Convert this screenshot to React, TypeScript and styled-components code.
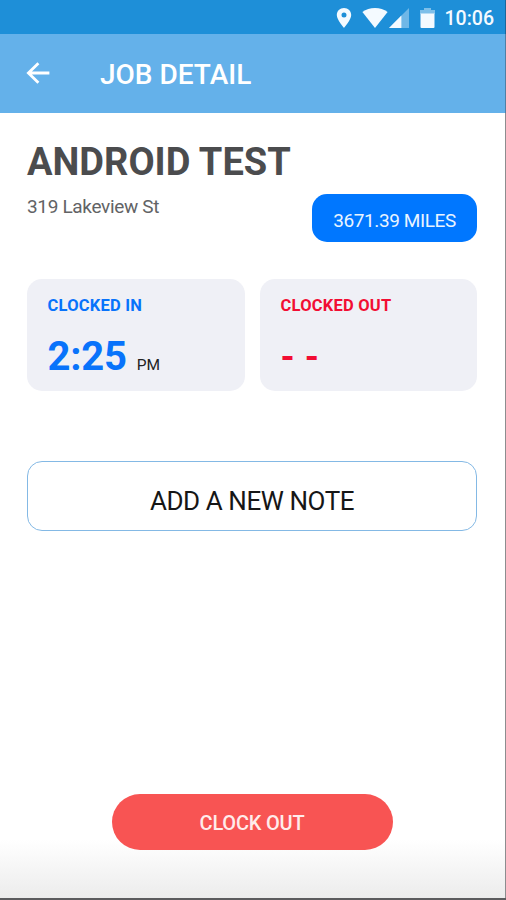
import React from "react";
import styled, { createGlobalStyle } from "styled-components";

const GlobalStyle = createGlobalStyle`
  *, *::before, *::after { box-sizing: border-box; }
  html, body { margin: 0; padding: 0; }
  body { font-family: Roboto, "Liberation Sans", sans-serif; background: #fff; }
  button { font-family: inherit; cursor: pointer; }
`;

const Screen = styled.div`
  display: flex;
  flex-direction: column;
  width: 506px;
  height: 900px;
  overflow: hidden;
  background: linear-gradient(to bottom, #fff 840px, #ececec 898px);
  border-bottom: 2px solid #5c5c5e;
`;

const StatusBar = styled.div`
  display: flex;
  align-items: center;
  justify-content: flex-end;
  flex: none;
  height: 34px;
  padding: 2px 11px 0 0;
  border-right: 1px solid #1c6699;
  background: #1e8fd8;
  color: #f4faff;
`;

const StatusIcon = styled.svg<{ $gap: number }>`
  display: block;
  flex: none;
  margin-right: ${(p) => p.$gap}px;
`;

const StatusTime = styled.span`
  margin-top: 1px;
  font-size: 19.5px;
  font-weight: 500;
  line-height: 32px;
  white-space: nowrap;
`;

const AppBar = styled.header`
  display: flex;
  align-items: center;
  flex: none;
  height: 79px;
  padding-left: 26px;
  border-right: 1px solid #4f7fa5;
  background: #64b1ea;
  color: #fff;
`;

const BackButton = styled.button`
  display: flex;
  width: 24px;
  height: 24px;
  padding: 0;
  margin: 0 50px 2px 0;
  border: 0;
  background: none;
  color: inherit;
`;

const AppTitle = styled.h1`
  margin: 2px 0 0;
  font-size: 28px;
  font-weight: 500;
  line-height: 32px;
  white-space: nowrap;
`;

const Content = styled.main`
  display: flex;
  flex-direction: column;
  flex: 1;
  padding: 26px 28px 48px 27px;
  border-right: 1px solid #8d8d8f;
`;

const JobName = styled.h2`
  margin: 0;
  font-size: 38px;
  font-weight: 700;
  line-height: 46px;
  color: #4b4c4e;
  white-space: nowrap;
`;

const JobMeta = styled.div`
  display: flex;
  justify-content: space-between;
  align-items: flex-start;
  height: 58px;
  margin-top: 9px;
`;

const Address = styled.span`
  margin-top: 1px;
  font-size: 19px;
  line-height: 24px;
  letter-spacing: -0.33px;
  color: #626365;
  white-space: nowrap;
`;

const Distance = styled.span`
  display: flex;
  align-items: center;
  justify-content: center;
  width: 165px;
  height: 48px;
  padding-top: 5px;
  border-radius: 15px;
  background: #0077ff;
  color: #e9f4ff;
  font-size: 19px;
  letter-spacing: -0.4px;
  white-space: nowrap;
`;

const ClockCards = styled.section`
  display: grid;
  grid-template-columns: 218px 217px;
  justify-content: space-between;
  margin-top: 27px;
`;

const ClockCard = styled.article<{ $color: string }>`
  height: 112px;
  padding: 17px 20.5px 0;
  border-radius: 15px;
  background: #eff0f6;
  color: ${(p) => p.$color};
`;

const ClockLabel = styled.div`
  font-size: 16.5px;
  font-weight: 700;
  line-height: 20px;
  letter-spacing: 0.22px;
  white-space: nowrap;
`;

const ClockValue = styled.div<{ $empty?: boolean }>`
  display: flex;
  align-items: baseline;
  gap: 10px;
  margin-top: 17px;
  font-size: ${(p) => (p.$empty ? 36 : 40)}px;
  font-weight: 700;
  line-height: 48px;
  letter-spacing: -0.2px;
  word-spacing: ${(p) => (p.$empty ? 1.6 : 0)}px;
  white-space: nowrap;
`;

const Meridiem = styled.span`
  font-size: 15.5px;
  font-weight: 400;
  line-height: 20px;
  letter-spacing: 0;
  color: #222;
`;

const NoteButton = styled.button`
  height: 70px;
  margin: 70px 0 0;
  padding: 10px 0 0;
  border: 1px solid #84b9e5;
  border-radius: 15px;
  background: #fff;
  color: #161616;
  font-size: 26px;
  line-height: 30px;
  letter-spacing: -0.43px;
`;

const ClockOutButton = styled.button`
  align-self: center;
  width: 281px;
  height: 56px;
  margin-top: auto;
  padding: 2px 0 0;
  border: 0;
  border-radius: 28px;
  background: #f85453;
  color: #ffeceb;
  font-size: 20px;
  font-weight: 500;
  letter-spacing: -0.2px;
`;

export default function App() {
  return (
    <>
      <GlobalStyle />
      <Screen>
        <StatusBar>
          <StatusIcon $gap={10} width="16" height="20" viewBox="0 0 16 20" fill="currentColor">
            <path
              fillRule="evenodd"
              d="M8 0C3.9 0 .8 3.1.8 7.1.8 12 8 20 8 20s7.2-8 7.2-12.9C15.2 3.1 12.1 0 8 0Zm0 4.6a2.5 2.5 0 1 1 0 5 2.5 2.5 0 0 1 0-5Z"
            />
          </StatusIcon>
          <StatusIcon $gap={1} width="26" height="20" viewBox="0 0 26 20" fill="currentColor">
            <path d="M.4 4.1C4 1.4 8.2 0 13 0s9 1.4 12.6 4.1L13 20Z" />
          </StatusIcon>
          <StatusIcon $gap={11} width="20" height="20" viewBox="0 0 20 20" fill="currentColor">
            <path opacity=".38" d="M20 0v20H0Z" />
            <path d="M12.4 7.6V20H0Z" />
          </StatusIcon>
          <StatusIcon $gap={10} width="15" height="20" viewBox="0 0 15 20" fill="currentColor">
            <path opacity=".45" d="M4 0h7v2h4v4H0V2h4Z" />
            <path d="M.5 5.5h14V19a1 1 0 0 1-1 1h-12a1 1 0 0 1-1-1Z" />
          </StatusIcon>
          <StatusTime>10:06</StatusTime>
        </StatusBar>
        <AppBar>
          <BackButton aria-label="Back">
            <svg width="24" height="24" viewBox="0 0 24 24" fill="none" stroke="currentColor" strokeWidth="2.8">
              <path d="M12.4 2.2 2.4 12l10 9.8M2.4 12h21" />
            </svg>
          </BackButton>
          <AppTitle>JOB DETAIL</AppTitle>
        </AppBar>
        <Content>
          <JobName>ANDROID TEST</JobName>
          <JobMeta>
            <Address>319 Lakeview St</Address>
            <Distance>3671.39 MILES</Distance>
          </JobMeta>
          <ClockCards>
            <ClockCard $color="#0873fb">
              <ClockLabel>CLOCKED IN</ClockLabel>
              <ClockValue>
                2:25<Meridiem>PM</Meridiem>
              </ClockValue>
            </ClockCard>
            <ClockCard $color="#f20d33">
              <ClockLabel>CLOCKED OUT</ClockLabel>
              <ClockValue $empty>- -</ClockValue>
            </ClockCard>
          </ClockCards>
          <NoteButton>ADD A NEW NOTE</NoteButton>
          <ClockOutButton>CLOCK OUT</ClockOutButton>
        </Content>
      </Screen>
    </>
  );
}
